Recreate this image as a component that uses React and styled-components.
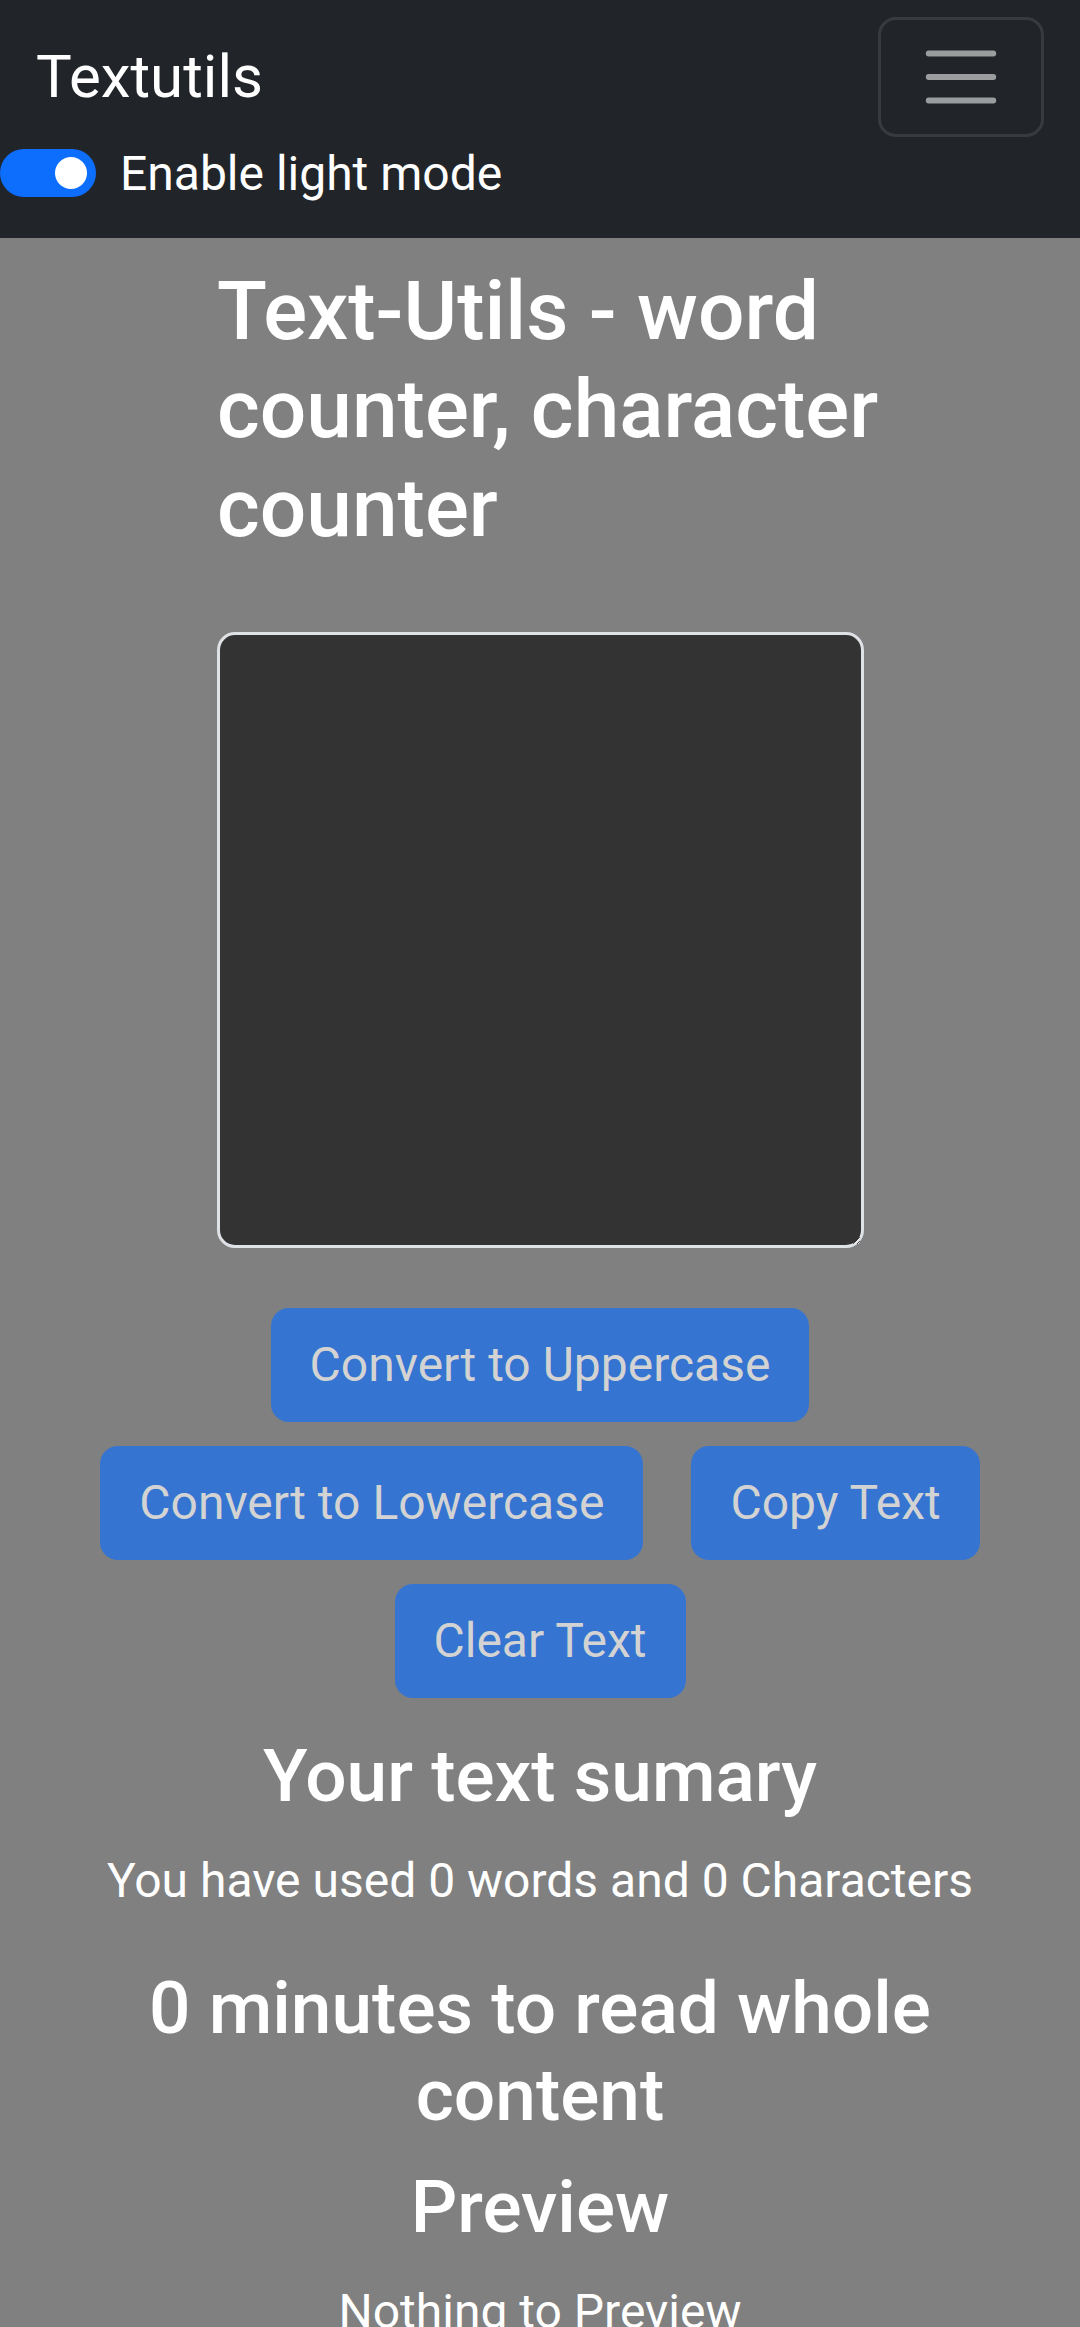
import React from 'react'
import styled, { createGlobalStyle } from 'styled-components';

const GlobalStyle = createGlobalStyle`
  * { box-sizing: border-box; }
  body {
    margin: 0;
    background: #808080;
    font-family: Roboto, "Liberation Sans", sans-serif;
    color: white;
  }
`

const Navbar = styled.nav`
  background: #212529;
  height: 238px;
  padding: 17px 36px 0 0;
`
const BrandRow = styled.div`
  display: flex;
  align-items: center;
  justify-content: space-between;
  padding-left: 36px;
`
const Brand = styled.a`
  font-size: 60px;
  line-height: 90px;
  color: white;
  text-decoration: none;
`
const Toggler = styled.button`
  width: 166px;
  height: 120px;
  padding: 12px 36px;
  background: transparent;
  border: 3px solid rgba(255, 255, 255, 0.1);
  border-radius: 18px;
  display: flex;
  align-items: center;
  justify-content: center;
`
const SwitchRow = styled.label`
  display: flex;
  align-items: center;
  height: 72px;
  font-size: 48px;
  color: white;
`
const Switch = styled.span`
  position: relative;
  width: 96px;
  height: 48px;
  border-radius: 24px;
  background: #0d6efd;
  margin-right: 24px;

  &::after {
    content: "";
    position: absolute;
    right: 9px;
    top: 8px;
    width: 32px;
    height: 32px;
    border-radius: 50%;
    background: white;
  }
`
const Main = styled.main`
  padding: 24px 36px 0;
`
const Title = styled.h1`
  margin: 0 145px 75px 181px;
  font-size: 82px;
  font-weight: 500;
  line-height: 1.2;
`
const TextBox = styled.textarea`
  display: block;
  width: 647px;
  height: 616px;
  margin: 0 auto 48px;
  background: #333333;
  border: 3px solid #dee2e6;
  border-radius: 18px;
  color: white;
  font-family: inherit;
  font-size: 48px;
  padding: 18px 36px;
`
const ButtonBar = styled.div`
  display: flex;
  flex-wrap: wrap;
  justify-content: center;
`
const Button = styled.button`
  margin: 12px 24px;
  padding: 18px 36px;
  height: 114px;
  font-family: inherit;
  font-size: 48px;
  line-height: 72px;
  border: 3px solid transparent;
  border-radius: 18px;
  background: #3574d1;
  color: #d3d3d3;
`
const Summary = styled.section`
  text-align: center;
  padding-top: 23px;
`
const Heading = styled.h2`
  margin: 0 0 24px;
  font-size: 73px;
  font-weight: 500;
  line-height: 1.2;
`
const Text = styled.p`
  margin: 0 0 48px;
  font-size: 48px;
  line-height: 72px;
`

const buttons = ['Convert to Uppercase', 'Convert to Lowercase', 'Copy Text', 'Clear Text']

export default function App() {
  return (
    <>
      <GlobalStyle />
      <Navbar>
        <BrandRow>
          <Brand href="#">Textutils</Brand>
          <Toggler>
            <svg width="90" height="90" viewBox="0 0 30 30">
              <path d="M4 7h22M4 15h22M4 23h22" stroke="rgba(255,255,255,0.55)" strokeWidth="2" strokeLinecap="round" />
            </svg>
          </Toggler>
        </BrandRow>
        <SwitchRow>
          <Switch />
          Enable light mode
        </SwitchRow>
      </Navbar>
      <Main>
        <Title>Text-Utils - word counter, character counter</Title>
        <TextBox rows={8} />
        <ButtonBar>
          {buttons.map(b => <Button key={b} disabled>{b}</Button>)}
        </ButtonBar>
        <Summary>
          <Heading>Your text sumary</Heading>
          <Text>You have used 0 words and 0 Characters</Text>
          <Heading>0 minutes to read whole content</Heading>
          <Heading>Preview</Heading>
          <Text>Nothing to Preview</Text>
        </Summary>
      </Main>
    </>
  )
}
